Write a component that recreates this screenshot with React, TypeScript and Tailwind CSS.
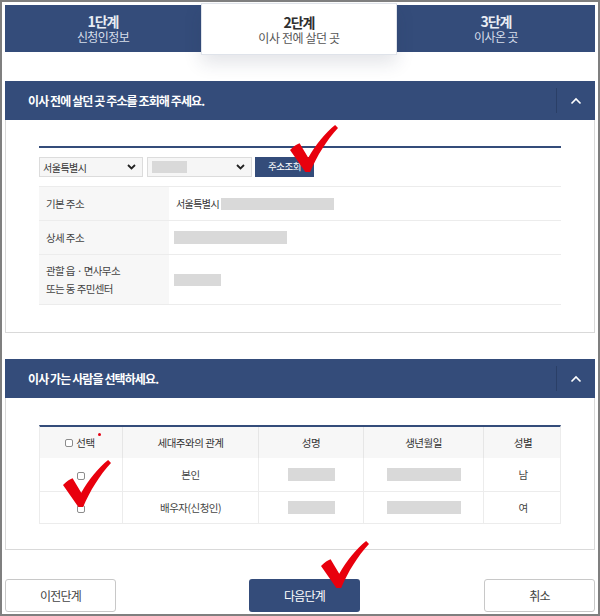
import React from "react";

function RedCheck({ className }: { className: string }) {
  return (
    <svg
      className={`absolute z-20 ${className}`}
      width="48"
      height="50"
      viewBox="0 0 50 50"
    >
      <path
        d="M0 26 C4 22 7 20 10 19 L19 34 C27 20 37 8 47 0 L50 3 C38 16 28 32 21 49 L16 49 Z"
        fill="#e8000d"
      />
    </svg>
  );
}

function ChevronUp() {
  return (
    <svg width="12" height="8" viewBox="0 0 12 8">
      <polyline
        points="1.5,6.5 6,2 10.5,6.5"
        fill="none"
        stroke="#ffffff"
        strokeWidth="1.6"
      />
    </svg>
  );
}

function ChevronDown() {
  return (
    <svg width="9" height="6" viewBox="0 0 9 6">
      <polyline
        points="1,1 4.5,4.5 8,1"
        fill="none"
        stroke="#222"
        strokeWidth="1.8"
      />
    </svg>
  );
}

function SectionHeader({ title }: { title: string }) {
  return (
    <div className="flex h-[39px] items-center bg-[#344c7a]">
      <div className="flex-1 pl-[23px] text-[12px] font-bold tracking-[-0.9px] text-white">
        {title}
      </div>
      <div className="h-[25px] w-px bg-[#2a3f67]" />
      <div className="flex w-[38px] items-center justify-center">
        <ChevronUp />
      </div>
    </div>
  );
}

function Box() {
  return (
    <span className="inline-block h-[8px] w-[8px] rounded-[2px] border border-[#8c8c8c] bg-white" />
  );
}

export default function App() {
  return (
    <div className="relative h-[616px] w-[600px] overflow-hidden border-2 border-[#7f7f7f] bg-white px-[3px] pt-[3px] font-['Noto_Sans_CJK_KR','Noto_Sans',sans-serif] text-[#333]">
      {/* Steps */}
      <div className="flex h-[47px] bg-[#344c7a]">
        <div className="flex w-[196px] flex-col items-center justify-center">
          <div className="text-[14px] font-bold leading-[16px] tracking-[-1px] text-[#e9edf4]">1단계</div>
          <div className="text-[12px] leading-[16px] tracking-[-0.6px] text-[#d7deea]">신청인정보</div>
        </div>
        <div className="relative z-10 -mb-[3px] -mt-[2px] flex w-[196px] flex-col items-center justify-center border border-[#dfe3ea] bg-white pt-[1px] shadow-[0_8px_18px_rgba(40,50,80,0.13)]">
          <div className="text-[14px] font-bold leading-[16px] tracking-[-1px] text-[#2f2f2f]">2단계</div>
          <div className="text-[12px] leading-[16px] tracking-[-0.4px] text-[#555]">이사 전에 살던 곳</div>
        </div>
        <div className="flex flex-1 flex-col items-center justify-center">
          <div className="text-[14px] font-bold leading-[16px] tracking-[-1px] text-[#e9edf4]">3단계</div>
          <div className="text-[12px] leading-[16px] tracking-[-0.6px] text-[#d7deea]">이사온 곳</div>
        </div>
      </div>

      {/* Section 1 */}
      <div className="mt-[29px]">
        <SectionHeader title="이사 전에 살던 곳 주소를 조회해 주세요." />
        <div className="border border-t-0 border-[#d9d9d9] px-[33px] pb-[27px] pt-[26px]">
          <div className="border-t-2 border-[#344c7a]" />
          <div className="mt-[9px] flex h-[20px] text-[10px] tracking-[-0.5px]">
            <div className="flex w-[104px] items-center justify-between border border-[#dcdcdc] bg-[#f6f6f6] pl-[3px] pr-[6px]">
              <span className="text-[#333]">서울특별시</span>
              <ChevronDown />
            </div>
            <div className="ml-[4px] flex w-[105px] items-center justify-between border border-[#dcdcdc] bg-[#f6f6f6] pl-[4px] pr-[6px]">
              <span className="inline-block h-[12px] w-[35px] bg-[#d9d9d9]" />
              <ChevronDown />
            </div>
            <div className="ml-[3px] flex w-[59px] items-center justify-center bg-[#344c7a] pb-[2px] text-[9.5px] text-white">
              주소조회
            </div>
          </div>
          <div className="mt-[9px] border-t border-[#ececec] text-[10.5px] tracking-[-0.6px]">
            <div className="flex h-[34px] border-b border-[#ececec]">
              <div className="flex w-[130px] items-center bg-[#f7f7f7] pl-[7px] text-[#444]">기본 주소</div>
              <div className="flex items-center pl-[7px] text-[10px] text-[#333]">
                서울특별시
                <span className="ml-[2px] inline-block h-[12px] w-[113px] bg-[#d9d9d9]" />
              </div>
            </div>
            <div className="flex h-[34px] border-b border-[#ececec]">
              <div className="flex w-[130px] items-center bg-[#f7f7f7] pl-[7px] text-[#444]">상세 주소</div>
              <div className="flex items-center pl-[5px]">
                <span className="inline-block h-[13px] w-[113px] bg-[#d9d9d9]" />
              </div>
            </div>
            <div className="flex h-[50px] border-b border-[#ececec]">
              <div className="flex w-[130px] flex-col justify-center bg-[#f7f7f7] pl-[7px] leading-[18px] text-[#444]">
                <span>관할 읍 · 면사무소</span>
                <span>또는 동 주민센터</span>
              </div>
              <div className="flex items-center pl-[5px]">
                <span className="inline-block h-[12px] w-[47px] bg-[#d9d9d9]" />
              </div>
            </div>
          </div>
        </div>
      </div>

      {/* Section 2 */}
      <div className="mt-[26px]">
        <SectionHeader title="이사 가는 사람을 선택하세요." />
        <div className="border border-t-0 border-[#d9d9d9] px-[33px] pb-[25px] pt-[27px]">
          <div className="border-x border-t-2 border-x-[#ececec] border-t-[#344c7a] text-[10.5px] tracking-[-0.5px]">
            <div className="grid h-[31px] grid-cols-[83px_136px_105px_120px_78px] bg-[#f7f7f7] text-[#333]">
              <div className="flex items-center justify-center border-r border-[#e6e6e6] pr-[2px]">
                <Box />
                <span className="relative ml-[3px]">
                  선택
                  <span className="absolute -right-[6px] -top-[2px] h-[3px] w-[3px] rounded-full bg-[#e60012]" />
                </span>
              </div>
              <div className="flex items-center justify-center border-r border-[#e6e6e6]">세대주와의 관계</div>
              <div className="flex items-center justify-center border-r border-[#e6e6e6]">성명</div>
              <div className="flex items-center justify-center border-r border-[#e6e6e6]">생년월일</div>
              <div className="flex items-center justify-center">성별</div>
            </div>
            <div className="grid h-[34px] grid-cols-[83px_136px_105px_120px_78px] border-b border-[#ececec] text-[#444]">
              <div className="flex items-center justify-center border-r border-[#ececec] pt-[3px]">
                <Box />
              </div>
              <div className="flex items-center justify-center border-r border-[#ececec]">본인</div>
              <div className="flex items-center justify-center border-r border-[#ececec]">
                <span className="inline-block h-[13px] w-[47px] bg-[#d9d9d9]" />
              </div>
              <div className="flex items-center justify-center border-r border-[#ececec]">
                <span className="inline-block h-[13px] w-[74px] bg-[#d9d9d9]" />
              </div>
              <div className="flex items-center justify-center">남</div>
            </div>
            <div className="grid h-[32px] grid-cols-[83px_136px_105px_120px_78px] border-b border-[#ececec] text-[#444]">
              <div className="flex items-center justify-center border-r border-[#ececec] pt-[3px]">
                <Box />
              </div>
              <div className="flex items-center justify-center border-r border-[#ececec]">배우자(신청인)</div>
              <div className="flex items-center justify-center border-r border-[#ececec]">
                <span className="inline-block h-[13px] w-[47px] bg-[#d9d9d9]" />
              </div>
              <div className="flex items-center justify-center border-r border-[#ececec]">
                <span className="inline-block h-[13px] w-[74px] bg-[#d9d9d9]" />
              </div>
              <div className="flex items-center justify-center">여</div>
            </div>
          </div>
        </div>
      </div>

      {/* Buttons */}
      <div className="mt-[29px] flex text-[12px] tracking-[-0.8px]">
        <div className="flex h-[33px] w-[111px] items-center justify-center rounded-[3px] border border-[#c8c8c8] bg-white text-[#444]">
          이전단계
        </div>
        <div className="ml-[133px] flex h-[33px] w-[111px] items-center justify-center rounded-[3px] bg-[#344c7a] text-white">
          다음단계
        </div>
        <div className="ml-auto flex h-[33px] w-[111px] items-center justify-center rounded-[3px] border border-[#c8c8c8] bg-white text-[#444]">
          취소
        </div>
      </div>

      <RedCheck className="left-[288px] top-[122px]" />
      <RedCheck className="left-[61px] top-[457px]" />
      <RedCheck className="left-[319px] top-[538px]" />
    </div>
  );
}
